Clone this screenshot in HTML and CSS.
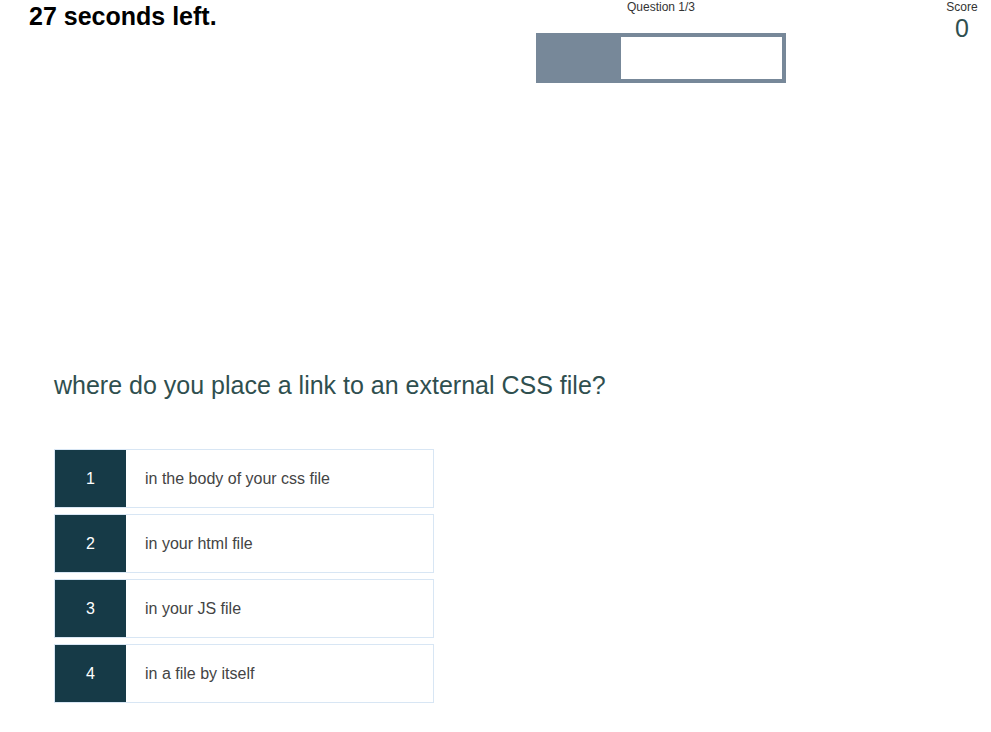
FILE: index.html
```html
<!DOCTYPE html>
<html>
<head>
<meta charset="utf-8">
<link rel="stylesheet" href="styles.css">
</head>
<body>
<div class="header">
  <div class="timer">27 seconds left.</div>
  <div class="progress-col">
    <div class="q-count">Question 1/3</div>
    <div class="progress"><div class="progress-fill" style="width:33.33%"></div></div>
  </div>
  <div class="score-col">
    <div class="score-label">Score</div>
    <div class="score-value">0</div>
  </div>
</div>
<div class="quiz">
  <h2 class="question">where do you place a link to an external CSS file?</h2>
  <ul class="options">
    <li class="option"><span class="num">1</span><span class="text">in the body of your css file</span></li>
    <li class="option"><span class="num">2</span><span class="text">in your html file</span></li>
    <li class="option"><span class="num">3</span><span class="text">in your JS file</span></li>
    <li class="option"><span class="num">4</span><span class="text">in a file by itself</span></li>
  </ul>
</div>
</body>
</html>
```
FILE: styles.css
```css
* { box-sizing: border-box; }
body {
  margin: 0;
  font-family: "Liberation Sans", Arial, sans-serif;
  background: #fff;
  color: #333;
}
.header {
  display: flex;
  align-items: flex-start;
}
.timer {
  flex: 1;
  padding-left: 29px;
  padding-top: 2px;
  font-size: 25px;
  line-height: 28px;
  font-weight: bold;
  color: #000;
}
.progress-col {
  width: 250px;
  margin-right: 147px;
  text-align: center;
}
.q-count {
  font-size: 12px;
  line-height: 14px;
  color: #333;
}
.progress {
  margin-top: 19px;
  height: 50px;
  border: 4px solid #778899;
  background: #fff;
}
.progress-fill {
  height: 100%;
  background: #778899;
}
.score-col {
  width: 58px;
  text-align: center;
  color: #333;
}
.score-label {
  font-size: 12px;
  line-height: 14px;
}
.score-value {
  font-size: 25px;
  line-height: 28px;
  color: #2f4f4f;
}
.quiz {
  padding-left: 54px;
}
.question {
  margin: 288px 0 0 0;
  font-size: 25px;
  font-weight: normal;
  line-height: 28px;
  color: #2f4f4f;
}
.options {
  list-style: none;
  margin: 50px 0 0 0;
  padding: 0;
  display: flex;
  flex-direction: column;
  gap: 6px;
}
.option {
  display: flex;
  width: 380px;
  height: 59px;
  border: 1px solid #d8e6f4;
  background: #fff;
}
.num {
  width: 71px;
  background: #163a47;
  color: #fff;
  font-size: 16px;
  display: flex;
  align-items: center;
  justify-content: center;
}
.text {
  display: flex;
  align-items: center;
  padding-left: 19px;
  font-size: 16px;
  color: #444;
}
```
